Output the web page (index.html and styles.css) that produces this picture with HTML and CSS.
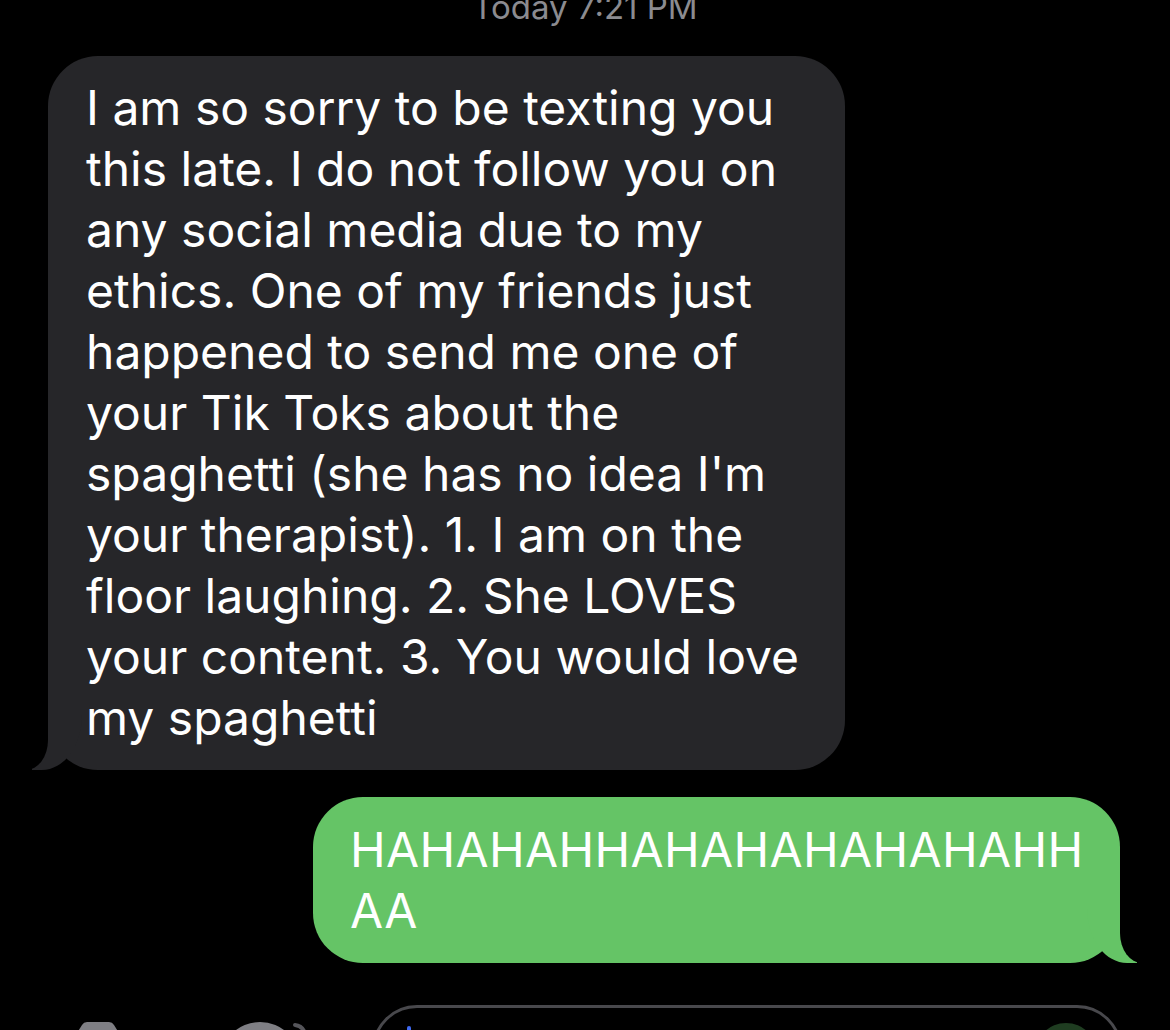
FILE: index.html
```html
<!DOCTYPE html>
<html lang="en">
<head>
<meta charset="utf-8">
<title>Messages</title>
<link rel="stylesheet" href="styles.css">
</head>
<body>
<main class="thread">
  <div class="stamp">Today 7:21 PM</div>

  <div class="row row-in">
    <div class="bubble in">I am so sorry to be texting you<br>this late. I do not follow you on<br>any social media due to my<br>ethics. One of my friends just<br>happened to send me one of<br>your Tik Toks about the<br>spaghetti (she has no idea I'm<br>your therapist). 1. I am on the<br>floor laughing. 2. She LOVES<br>your content. 3. You would love<br>my spaghetti</div>
  </div>

  <div class="row row-out">
    <div class="bubble out">HAHAHAHHAHAHAHAHAHAHH<br>AA</div>
  </div>

  <div class="composer">
    <svg class="icon-camera" width="76" height="60" viewBox="0 0 76 60" aria-hidden="true">
      <path d="M27 0h22a6 6 0 0 1 5 3l5 8h9a8 8 0 0 1 8 8v33a8 8 0 0 1-8 8H8a8 8 0 0 1-8-8V19a8 8 0 0 1 8-8h9l5-8a6 6 0 0 1 5-3z" fill="#7f7f84"/>
    </svg>
    <svg class="icon-apps" width="92" height="80" viewBox="0 0 92 80" aria-hidden="true">
      <circle cx="40" cy="40" r="40" fill="#7f7f84"/>
      <path d="M75 3a11 11 0 0 1 9 6" stroke="#55555a" stroke-width="4" fill="none" stroke-linecap="round"/>
    </svg>
    <div class="field">
      <span class="caret"></span>
      <span class="send"></span>
    </div>
  </div>
</main>
</body>
</html>
```

FILE: styles.css
```css
html, body {
  margin: 0;
  padding: 0;
  background: #000;
}

body {
  width: 1170px;
  height: 1030px;
  overflow: hidden;
  font-family: Inter, "Liberation Sans", sans-serif;
  -webkit-font-smoothing: antialiased;
}

.thread {
  display: flex;
  flex-direction: column;
}

/* time divider, partly scrolled off the top */
.stamp {
  margin-top: -13px;
  text-align: center;
  color: #8b8b90;
  font-size: 33px;
  line-height: 41px;
}

.row {
  display: flex;
}

.row-in {
  margin-top: 28px;
  padding-left: 48px;
}

.row-out {
  margin-top: 27px;
  justify-content: flex-end;
  padding-right: 50px;
}

.bubble {
  position: relative;
  box-sizing: border-box;
  color: #fff;
  font-size: 48px;
  line-height: 61px;
  border-radius: 50px;
  white-space: nowrap;
}

.bubble.in {
  width: 797px;
  background: #262629;
  padding: 21px 30px 22px 38px;
}

.bubble.out {
  width: 807px;
  background: #65c466;
  padding: 22px 30px 22px 37px;
  letter-spacing: 0.35px;
}

/* bubble tails */
.bubble::before,
.bubble::after {
  content: "";
  position: absolute;
  bottom: 0;
}

.bubble.in::before {
  left: -16px;
  width: 50px;
  height: 60px;
  background: #262629;
  border-bottom-right-radius: 40px 55px;
}

.bubble.in::after {
  left: -40px;
  width: 40px;
  height: 60px;
  background: #000;
  border-bottom-right-radius: 22px 30px;
}

.bubble.out::before {
  right: -17px;
  width: 50px;
  height: 60px;
  background: #65c466;
  border-bottom-left-radius: 40px 55px;
}

.bubble.out::after {
  right: -40px;
  width: 40px;
  height: 60px;
  background: #000;
  border-bottom-left-radius: 22px 30px;
}

/* input bar along the bottom */
.composer {
  margin-top: 42px;
  height: 96px;
  display: flex;
  align-items: flex-start;
  padding-left: 60px;
}

.icon-camera {
  margin-top: 17px;
  flex: none;
}

.icon-apps {
  margin-top: 17px;
  margin-left: 84px;
  flex: none;
}

.field {
  margin-left: 60px;
  box-sizing: border-box;
  width: 750px;
  height: 96px;
  border: 3px solid #48484c;
  border-radius: 45px;
  display: flex;
  align-items: flex-start;
  justify-content: space-between;
  padding: 15px 22px 0 32px;
  flex: none;
}

.caret {
  margin-top: 3px;
  width: 4px;
  height: 44px;
  border-radius: 2px;
  background: #3f6af2;
}

.send {
  width: 62px;
  height: 62px;
  border-radius: 50%;
  background: #1f3d21;
}
```
